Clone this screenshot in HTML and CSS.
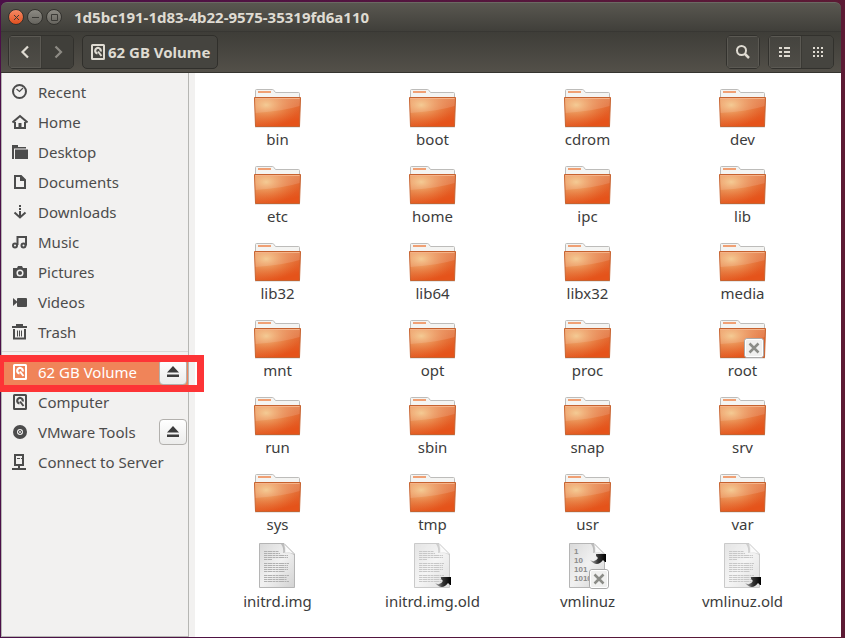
FILE: index.html
```html
<!DOCTYPE html>
<html lang="en">

<head>
    <meta charset="UTF-8">
    <meta name="viewport" content="width=device-width, initial-scale=1.0">
    <title>Files</title>
    <link rel="stylesheet" href="styles.css">
</head>

<body>
    <!-- shared icons -->
    <svg class="defs" width="0" height="0" aria-hidden="true">
        <defs>
            <linearGradient id="folder-front" x1="0" y1="0" x2="0.5" y2="1">
                <stop offset="0" stop-color="#e8905a" />
                <stop offset="0.5" stop-color="#e2723a" />
                <stop offset="1" stop-color="#e5531a" />
            </linearGradient>
            <radialGradient id="folder-glow" cx="0.25" cy="0.25" r="0.75">
                <stop offset="0" stop-color="#f6d090" stop-opacity="0.85" />
                <stop offset="1" stop-color="#f08040" stop-opacity="0" />
            </radialGradient>
            <linearGradient id="paper" x1="0" y1="0" x2="1" y2="1">
                <stop offset="0" stop-color="#d9d9d9" />
                <stop offset="0.5" stop-color="#f1f1f1" />
                <stop offset="1" stop-color="#d2d2d2" />
            </linearGradient>
            <linearGradient id="arrow" x1="0" y1="0" x2="1" y2="0">
                <stop offset="0" stop-color="#bbb" />
                <stop offset="0.5" stop-color="#333" />
                <stop offset="1" stop-color="#000" />
            </linearGradient>

            <symbol id="folder" viewBox="0 0 48 48">
                <path d="M1 46h45v1.500H1z" fill="#000" opacity="0.2" />
                <path d="M1.500 20V10.500q0-1 1-1h16q1 0 1.500 1l1.500 2h23q1 0 1 1V20z" fill="#f4f4f2" stroke="#bdbcba" />
                <path d="M4 11h13v2H4z" fill="#f0a074" />
                <path d="M.5 17.500h46l-1 29h-44z" fill="url(#folder-front)" stroke="#c6622f" />
                <path d="M1 18h45l-1 28H2z" fill="url(#folder-glow)" />
                <path d="M1 18h45l-.4 8Q30 31 1.500 33z" fill="#fff" opacity="0.13" />
                <path d="M1.500 18.500h44" stroke="#f5b389" />
            </symbol>
            <symbol id="page" viewBox="0 0 48 48">
                <path d="M5.500 1.500H30L40.500 12v33.500h-35z" fill="url(#paper)" stroke="#b5b5b5" />
                <path d="M27 2h3l10 10v1q-5-4-11-2 1-5-2-9z" fill="#bbb" />
                <path d="M30 2l10 10q-5-2-9-1 .5-5-1-9z" fill="#fafafa" stroke="#ccc" stroke-width=".5" />
            </symbol>
            <symbol id="text-file" viewBox="0 0 48 48">
                <use href="#page" width="48" height="48" />
                <path d="M10 9.500h15M10 11.500h16M10 13.500h24M10 15.500h24M10 17.500h8M10 21.500h25M10 23.500h24M10 25.500h24M10 27.500h24M10 29.500h21M10 33.500h25M10 35.500h23M10 37.500h23M10 39.500h25" stroke="#b0b0b0" stroke-dasharray="3 .5 5 .5 2 .5" />
            </symbol>
            <symbol id="emblem-link" viewBox="0 0 16 11">
                <path d="M0 6Q5 9 8 4L6 2V0h10v8h-1l-2-2Q7 14 0 6z" fill="url(#arrow)" />
            </symbol>
            <symbol id="emblem-locked" viewBox="0 0 20 20">
                <rect x=".5" y=".5" width="19" height="19" rx="2.500" fill="#f0f0ef" stroke="#aaa" />
                <rect x="1.500" y="1.500" width="17" height="17" rx="1.500" fill="none" stroke="#fff" />
                <path d="M5.500 5.500l9 9M14.500 5.500l-9 9" stroke="#8b8c87" stroke-width="2.500" />
            </symbol>

            <symbol id="drive" viewBox="0 0 16 16">
                <rect x="2" y="1" width="12" height="14" rx=".5" fill="none" stroke="currentColor" stroke-width="2" />
                <path d="M7.500 9.500A2.800 2.800 0 1 1 10.700 7.500" fill="none" stroke="currentColor" stroke-width="2.200" />
                <path d="M8 7.500l3.500 4.500" stroke="currentColor" stroke-width="2" />
            </symbol>
            <symbol id="eject" viewBox="0 0 12 12">
                <path d="M6 0l6 6.500H0zM0 8.500h12v2.500H0z" fill="currentColor" />
            </symbol>
        </defs>
    </svg>

    <div class="window">
        <header class="titlebar">
            <button class="win-btn close" type="button" aria-label="Close">
                <svg width="7" height="7" viewBox="0 0 7 7"><path d="M1 1l5 5M6 1L1 6" /></svg>
            </button>
            <button class="win-btn" type="button" aria-label="Minimize">
                <svg width="7" height="7" viewBox="0 0 7 7"><path d="M0 3.500h7" /></svg>
            </button>
            <button class="win-btn" type="button" aria-label="Maximize">
                <svg width="7" height="7" viewBox="0 0 7 7"><path d="M.5.5h6v6h-6z" /></svg>
            </button>
            <h1>1d5bc191-1d83-4b22-9575-35319fd6a110</h1>
        </header>

        <div class="toolbar">
            <div class="group">
                <button class="tool" type="button" aria-label="Back">
                    <svg width="16" height="16" viewBox="0 0 16 16"><path d="M11 2.500L5.500 8l5.500 5.500" fill="none" stroke="currentColor" stroke-width="2.200" /></svg>
                </button>
                <button class="tool off" type="button" aria-label="Forward" disabled>
                    <svg width="16" height="16" viewBox="0 0 16 16"><path d="M5.500 2.500L11 8l-5.500 5.500" fill="none" stroke="currentColor" stroke-width="2.200" /></svg>
                </button>
            </div>
            <button class="path pressed" type="button">
                <svg width="16" height="16"><use href="#drive" /></svg>62 GB Volume
            </button>
            <div class="group search">
                <button class="tool" type="button" aria-label="Search">
                    <svg width="16" height="16" viewBox="0 0 16 16" fill="none" stroke="currentColor"><circle cx="6.500" cy="6.500" r="4.500" stroke-width="2" /><path d="M9.500 9.500l4.500 4.500" stroke-width="2.500" /></svg>
                </button>
            </div>
            <div class="group">
                <button class="tool" type="button" aria-label="List view">
                    <svg width="12" height="10" viewBox="0 0 12 10" fill="currentColor"><path d="M0 0h3v2H0zM5 0h6v2H5zM0 4h3v2H0zM5 4h6v2H5zM0 8h3v2H0zM5 8h6v2H5z" /></svg>
                </button>
                <button class="tool pressed" type="button" aria-label="Icon view" aria-pressed="true">
                    <svg width="10" height="10" viewBox="0 0 10 10" fill="currentColor"><path d="M0 0h2v2H0zM4 0h2v2H4zM8 0h2v2H8zM0 4h2v2H0zM4 4h2v2H4zM8 4h2v2H8zM0 8h2v2H0zM4 8h2v2H4zM8 8h2v2H8z" /></svg>
                </button>
            </div>
        </div>

        <div class="main">
            <nav class="sidebar">
                <ul>
                    <li><a href="#">
                        <svg class="icon" viewBox="0 0 16 16" fill="none" stroke="currentColor"><circle cx="7.500" cy="7.500" r="6.500" stroke-width="2" /><path d="M4.500 5l3 2.500L11 4" stroke-width="1.200" /></svg>Recent</a></li>
                    <li><a href="#">
                        <svg class="icon" viewBox="0 0 16 16"><path d="M.5 8.500L8 2l7.500 6.500" fill="none" stroke="currentColor" stroke-width="2" /><path d="M2 8h2v5h2.500V9h3v4H12V8h2v7H2z" fill="currentColor" /></svg>Home</a></li>
                    <li><a href="#">
                        <svg class="icon" viewBox="0 0 16 16" fill="currentColor"><path d="M0 1h6v2h8v1.500H2V15H0zM3 5.500h13V15H3z" /></svg>Desktop</a></li>
                    <li><a href="#">
                        <svg class="icon" viewBox="0 0 16 16"><path d="M3 2h6l4 4v8H3z" fill="none" stroke="currentColor" stroke-width="2" /><path d="M8 2h1l4 4v1H8z" fill="currentColor" /></svg>Documents</a></li>
                    <li><a href="#">
                        <svg class="icon" viewBox="0 0 16 16" fill="none" stroke="currentColor" stroke-width="2"><path d="M8 1v2M8 4v2M8 7v6" /><path d="M2.500 8.500L8 13.500l5.500-5" /></svg>Downloads</a></li>
                    <li><a href="#">
                        <svg class="icon" viewBox="0 0 16 16" fill="none" stroke="currentColor" stroke-width="2"><circle cx="3" cy="11.500" r="2" /><circle cx="11.500" cy="11.500" r="2" /><path d="M5.500 11V3H14v8.500" /></svg>Music</a></li>
                    <li><a href="#">
                        <svg class="icon" viewBox="0 0 16 16"><path d="M1 4h4l1-2h4l1 2h4v10H1z" fill="currentColor" /><circle cx="8" cy="9" r="2.800" fill="none" stroke="#f2f1f0" stroke-width="1.500" /></svg>Pictures</a></li>
                    <li><a href="#">
                        <svg class="icon" viewBox="0 0 16 16" fill="currentColor"><path d="M1 4l4 3.500v1L1 12z" /><rect x="5" y="4" width="10" height="9" rx="1" /></svg>Videos</a></li>
                    <li><a href="#">
                        <svg class="icon" viewBox="0 0 16 16" fill="none" stroke="currentColor"><path d="M0 3h15M4 1h7" stroke-width="1.800" /><path d="M2 5v9.500h11V5" stroke-width="2" /><path d="M5.500 6.500v6M7.500 6.500v6M9.500 6.500v6" /></svg>Trash</a></li>
                </ul>
                <ul class="devices">
                    <li class="selected">
                        <a href="#"><svg class="icon"><use href="#drive" /></svg>62 GB Volume</a>
                        <button class="eject" type="button" aria-label="Eject 62 GB Volume"><svg width="12" height="12"><use href="#eject" /></svg></button>
                        <span class="highlight"></span>
                    </li>
                    <li><a href="#"><svg class="icon"><use href="#drive" /></svg>Computer</a></li>
                    <li>
                        <a href="#"><svg class="icon" viewBox="0 0 16 16" fill="none" stroke="currentColor"><circle cx="8" cy="8" r="5" stroke-width="4" /><circle cx="8" cy="8" r="1.500" /></svg>VMware Tools</a>
                        <button class="eject" type="button" aria-label="Eject VMware Tools"><svg width="12" height="12"><use href="#eject" /></svg></button>
                    </li>
                    <li><a href="#">
                        <svg class="icon" viewBox="0 0 16 16" fill="none" stroke="currentColor"><path d="M3 1h8v10H3zM7 11v4M0 15h14" stroke-width="2" /><path d="M5 4.500h3M9 4.500h1" stroke-width="1" /></svg>Connect to Server</a></li>
                </ul>
            </nav>

            <main class="files">
                <a class="file" href="#"><svg viewBox="0 0 48 48"><use href="#folder" /></svg>bin</a>
                <a class="file" href="#"><svg viewBox="0 0 48 48"><use href="#folder" /></svg>boot</a>
                <a class="file" href="#"><svg viewBox="0 0 48 48"><use href="#folder" /></svg>cdrom</a>
                <a class="file" href="#"><svg viewBox="0 0 48 48"><use href="#folder" /></svg>dev</a>
                <a class="file" href="#"><svg viewBox="0 0 48 48"><use href="#folder" /></svg>etc</a>
                <a class="file" href="#"><svg viewBox="0 0 48 48"><use href="#folder" /></svg>home</a>
                <a class="file" href="#"><svg viewBox="0 0 48 48"><use href="#folder" /></svg>ipc</a>
                <a class="file" href="#"><svg viewBox="0 0 48 48"><use href="#folder" /></svg>lib</a>
                <a class="file" href="#"><svg viewBox="0 0 48 48"><use href="#folder" /></svg>lib32</a>
                <a class="file" href="#"><svg viewBox="0 0 48 48"><use href="#folder" /></svg>lib64</a>
                <a class="file" href="#"><svg viewBox="0 0 48 48"><use href="#folder" /></svg>libx32</a>
                <a class="file" href="#"><svg viewBox="0 0 48 48"><use href="#folder" /></svg>media</a>
                <a class="file" href="#"><svg viewBox="0 0 48 48"><use href="#folder" /></svg>mnt</a>
                <a class="file" href="#"><svg viewBox="0 0 48 48"><use href="#folder" /></svg>opt</a>
                <a class="file" href="#"><svg viewBox="0 0 48 48"><use href="#folder" /></svg>proc</a>
                <a class="file" href="#"><svg viewBox="0 0 48 48"><use href="#folder" /><use href="#emblem-locked" x="25" y="27" width="20" height="20" /></svg>root</a>
                <a class="file" href="#"><svg viewBox="0 0 48 48"><use href="#folder" /></svg>run</a>
                <a class="file" href="#"><svg viewBox="0 0 48 48"><use href="#folder" /></svg>sbin</a>
                <a class="file" href="#"><svg viewBox="0 0 48 48"><use href="#folder" /></svg>snap</a>
                <a class="file" href="#"><svg viewBox="0 0 48 48"><use href="#folder" /></svg>srv</a>
                <a class="file" href="#"><svg viewBox="0 0 48 48"><use href="#folder" /></svg>sys</a>
                <a class="file" href="#"><svg viewBox="0 0 48 48"><use href="#folder" /></svg>tmp</a>
                <a class="file" href="#"><svg viewBox="0 0 48 48"><use href="#folder" /></svg>usr</a>
                <a class="file" href="#"><svg viewBox="0 0 48 48"><use href="#folder" /></svg>var</a>
                <a class="file" href="#"><svg viewBox="0 0 48 48"><use href="#text-file" /></svg>initrd.img</a>
                <a class="file" href="#"><svg viewBox="0 0 48 48"><use class="faded" href="#text-file" /><use href="#emblem-link" x="26" y="35" width="16" height="11" /></svg>initrd.img.old</a>
                <a class="file" href="#">
                    <svg viewBox="0 0 48 48">
                        <use href="#page" />
                        <g class="bits"><text x="10" y="12">1</text><text x="10" y="21">10</text><text x="10" y="30">101</text><text x="10" y="39">1010</text></g>
                        <use href="#emblem-link" x="26" y="12" width="16" height="11" />
                        <use href="#emblem-locked" x="25" y="27" width="20" height="20" />
                    </svg>vmlinuz</a>
                <a class="file" href="#"><svg viewBox="0 0 48 48"><use class="faded" href="#text-file" /><use href="#emblem-link" x="26" y="35" width="16" height="11" /></svg>vmlinuz.old</a>
            </main>
        </div>
    </div>
</body>

</html>
```
FILE: styles.css
```css
* {
    box-sizing: border-box;
}

body {
    margin: 0;
    padding: 2px 4px 1px 1px;
    min-height: 100vh;
    display: flex;
    background: linear-gradient(to right, #4b0f48, #5c1a34);
    color: #3c3c3c;
    font-family: "Noto Sans", sans-serif;
    font-size: 15px;
    line-height: 20px;
}

button {
    margin: 0;
    padding: 0;
    font: inherit;
    color: inherit;
}

a {
    color: inherit;
    text-decoration: none;
}

ul {
    list-style: none;
    margin: 0;
    padding: 0;
}

.defs {
    position: absolute;
}

.window {
    flex: 1;
    display: flex;
    flex-direction: column;
}

/* title bar */
.titlebar {
    display: flex;
    align-items: center;
    gap: 3px;
    height: 29px;
    padding-left: 7px;
    border-radius: 6px 6px 0 0;
    border-top: 1px solid #6b6963;
    background: linear-gradient(#595750, #403f3a);
}

.titlebar h1 {
    margin: 0 0 0 9px;
    font-size: 15px;
    color: #dfdbd2;
}

.win-btn {
    display: flex;
    align-items: center;
    justify-content: center;
    width: 16px;
    height: 16px;
    border: 1px solid #33322e;
    border-radius: 50%;
    background: linear-gradient(#8c8a83, #66645e);
}

.win-btn path {
    fill: none;
    stroke: #3b3a36;
}

.win-btn.close {
    background: linear-gradient(#f58a65, #e2501f);
}

/* toolbar */
.toolbar {
    display: flex;
    align-items: center;
    gap: 8px;
    height: 42px;
    padding: 0 7px;
    border-top: 1px solid #383733;
    border-bottom: 1px solid #35342f;
    background: linear-gradient(#3e3d38, #535049);
    color: #dfdbd2;
}

.group {
    display: flex;
    height: 34px;
    border: 1px solid #32312d;
    border-radius: 5px;
    overflow: hidden;
}

.tool,
.path {
    display: flex;
    align-items: center;
    justify-content: center;
    border: 0;
    background: linear-gradient(#44433e, #4f4d47);
    box-shadow: inset 0 0 0 1px #5b5953;
}

.tool {
    width: 32px;
}

.tool + .tool {
    border-left: 1px solid #3a3934;
}

.tool.off {
    color: #8d8b84;
    background: #403f3a;
    box-shadow: none;
}

.path {
    gap: 2px;
    height: 34px;
    padding: 0 7px;
    border: 1px solid #302f2b;
    border-radius: 5px;
    font-weight: bold;
}

.pressed {
    background: #45443f;
    box-shadow: none;
}

.search {
    margin-left: auto;
}

/* content */
.main {
    flex: 1;
    display: flex;
    background: #f2f1f0;
}

.sidebar {
    width: 188px;
    padding-top: 4px;
    border: solid #b6b6b3;
    border-width: 0 1px 1px;
    color: #4c4c4c;
}

.sidebar li {
    position: relative;
    display: flex;
    align-items: center;
    height: 30px;
    padding: 0 1px 0 10px;
}

.sidebar a {
    flex: 1;
    display: flex;
    align-items: center;
    gap: 10px;
    white-space: nowrap;
}

.icon {
    width: 16px;
    height: 16px;
}

.devices {
    margin-top: 4px;
    padding-top: 5px;
    border-top: 1px solid #d9d8d6;
}

.sidebar .selected {
    background: #f08459;
    color: #fff;
}

.eject {
    display: flex;
    align-items: center;
    justify-content: center;
    width: 28px;
    height: 26px;
    border: 1px solid #b2b0ad;
    border-radius: 4px;
    background: linear-gradient(#fff, #ececeb);
    color: #3c3c3c;
}

/* red marker frame around the selected volume */
.highlight {
    position: absolute;
    inset: -2px -16px -5px -2px;
    border: solid #fd3436;
    border-width: 7px 7px 7px 4px;
    pointer-events: none;
}

.files {
    flex: 1;
    display: grid;
    grid-template-columns: repeat(auto-fill, 155px);
    grid-auto-rows: 70px;
    gap: 7px 0;
    margin-left: 6px;
    padding: 7px 0 0 5px;
    background: #fff;
}

.file {
    display: flex;
    flex-direction: column;
    align-items: center;
    line-height: 22px;
}

.file svg {
    flex-shrink: 0;
    width: 48px;
    height: 48px;
}

.faded {
    opacity: 0.7;
}

.bits {
    font: bold 8px "Liberation Sans", sans-serif;
    fill: #8a8a8a;
}
```
